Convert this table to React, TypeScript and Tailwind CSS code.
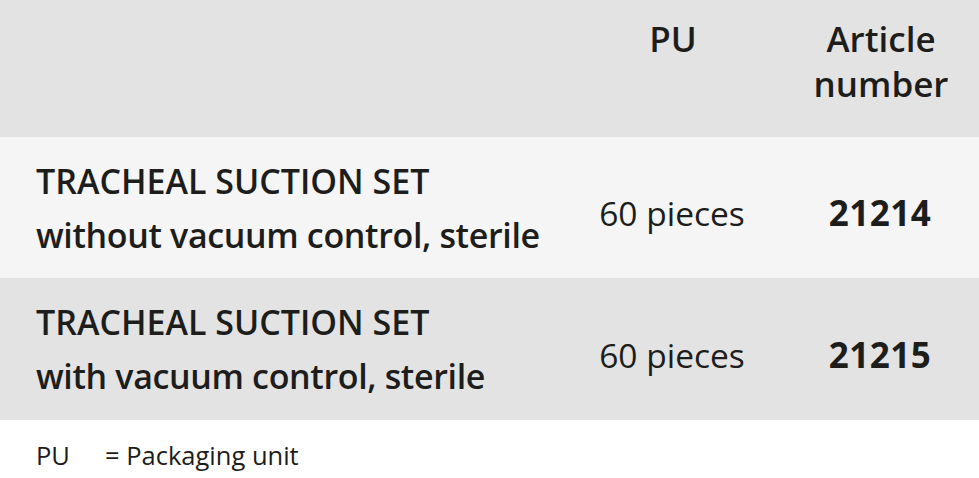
export default function App() {
  const rows = [
    { title: 'TRACHEAL SUCTION SET', sub: 'without vacuum control, sterile', pu: '60 pieces', art: '21214', bg: 'bg-[#f5f5f5]', h: 'h-[141px]' },
    { title: 'TRACHEAL SUCTION SET', sub: 'with vacuum control, sterile', pu: '60 pieces', art: '21215', bg: 'bg-[#e3e3e3]', h: 'h-[142px]' },
  ];

  return (
    <div className="w-[979px] h-[478px] bg-white text-[#1d1d1b] font-['Open_Sans',sans-serif]">
      {/* Header */}
      <div className="flex h-[137px] bg-[#e3e3e3] font-semibold text-[35px] leading-[45px]">
        <div className="w-[563px]" />
        <div className="w-[220px] pt-[16px] text-center">PU</div>
        <div className="flex-1 pt-[16px] text-center">
          Article
          <br />
          number
        </div>
      </div>

      {/* Rows */}
      {rows.map((r) => (
        <div key={r.art} className={`flex items-center ${r.h} ${r.bg}`}>
          <div className="w-[563px] pl-[36px] font-semibold text-[34px] leading-[54px]">
            <div>{r.title}</div>
            <div className="tracking-[-0.35px]">{r.sub}</div>
          </div>
          <div className="w-[218px] pt-[12px] text-center text-[33.5px]">{r.pu}</div>
          <div className="flex-1 pt-[12px] text-center font-bold text-[35px] tracking-[0.5px]">{r.art}</div>
        </div>
      ))}

      {/* Legend */}
      <div className="flex pl-[36px] pt-[18px] text-[25.5px] leading-[34px]">
        <span className="w-[69px]">PU</span>
        <span>= Packaging unit</span>
      </div>
    </div>
  );
}
